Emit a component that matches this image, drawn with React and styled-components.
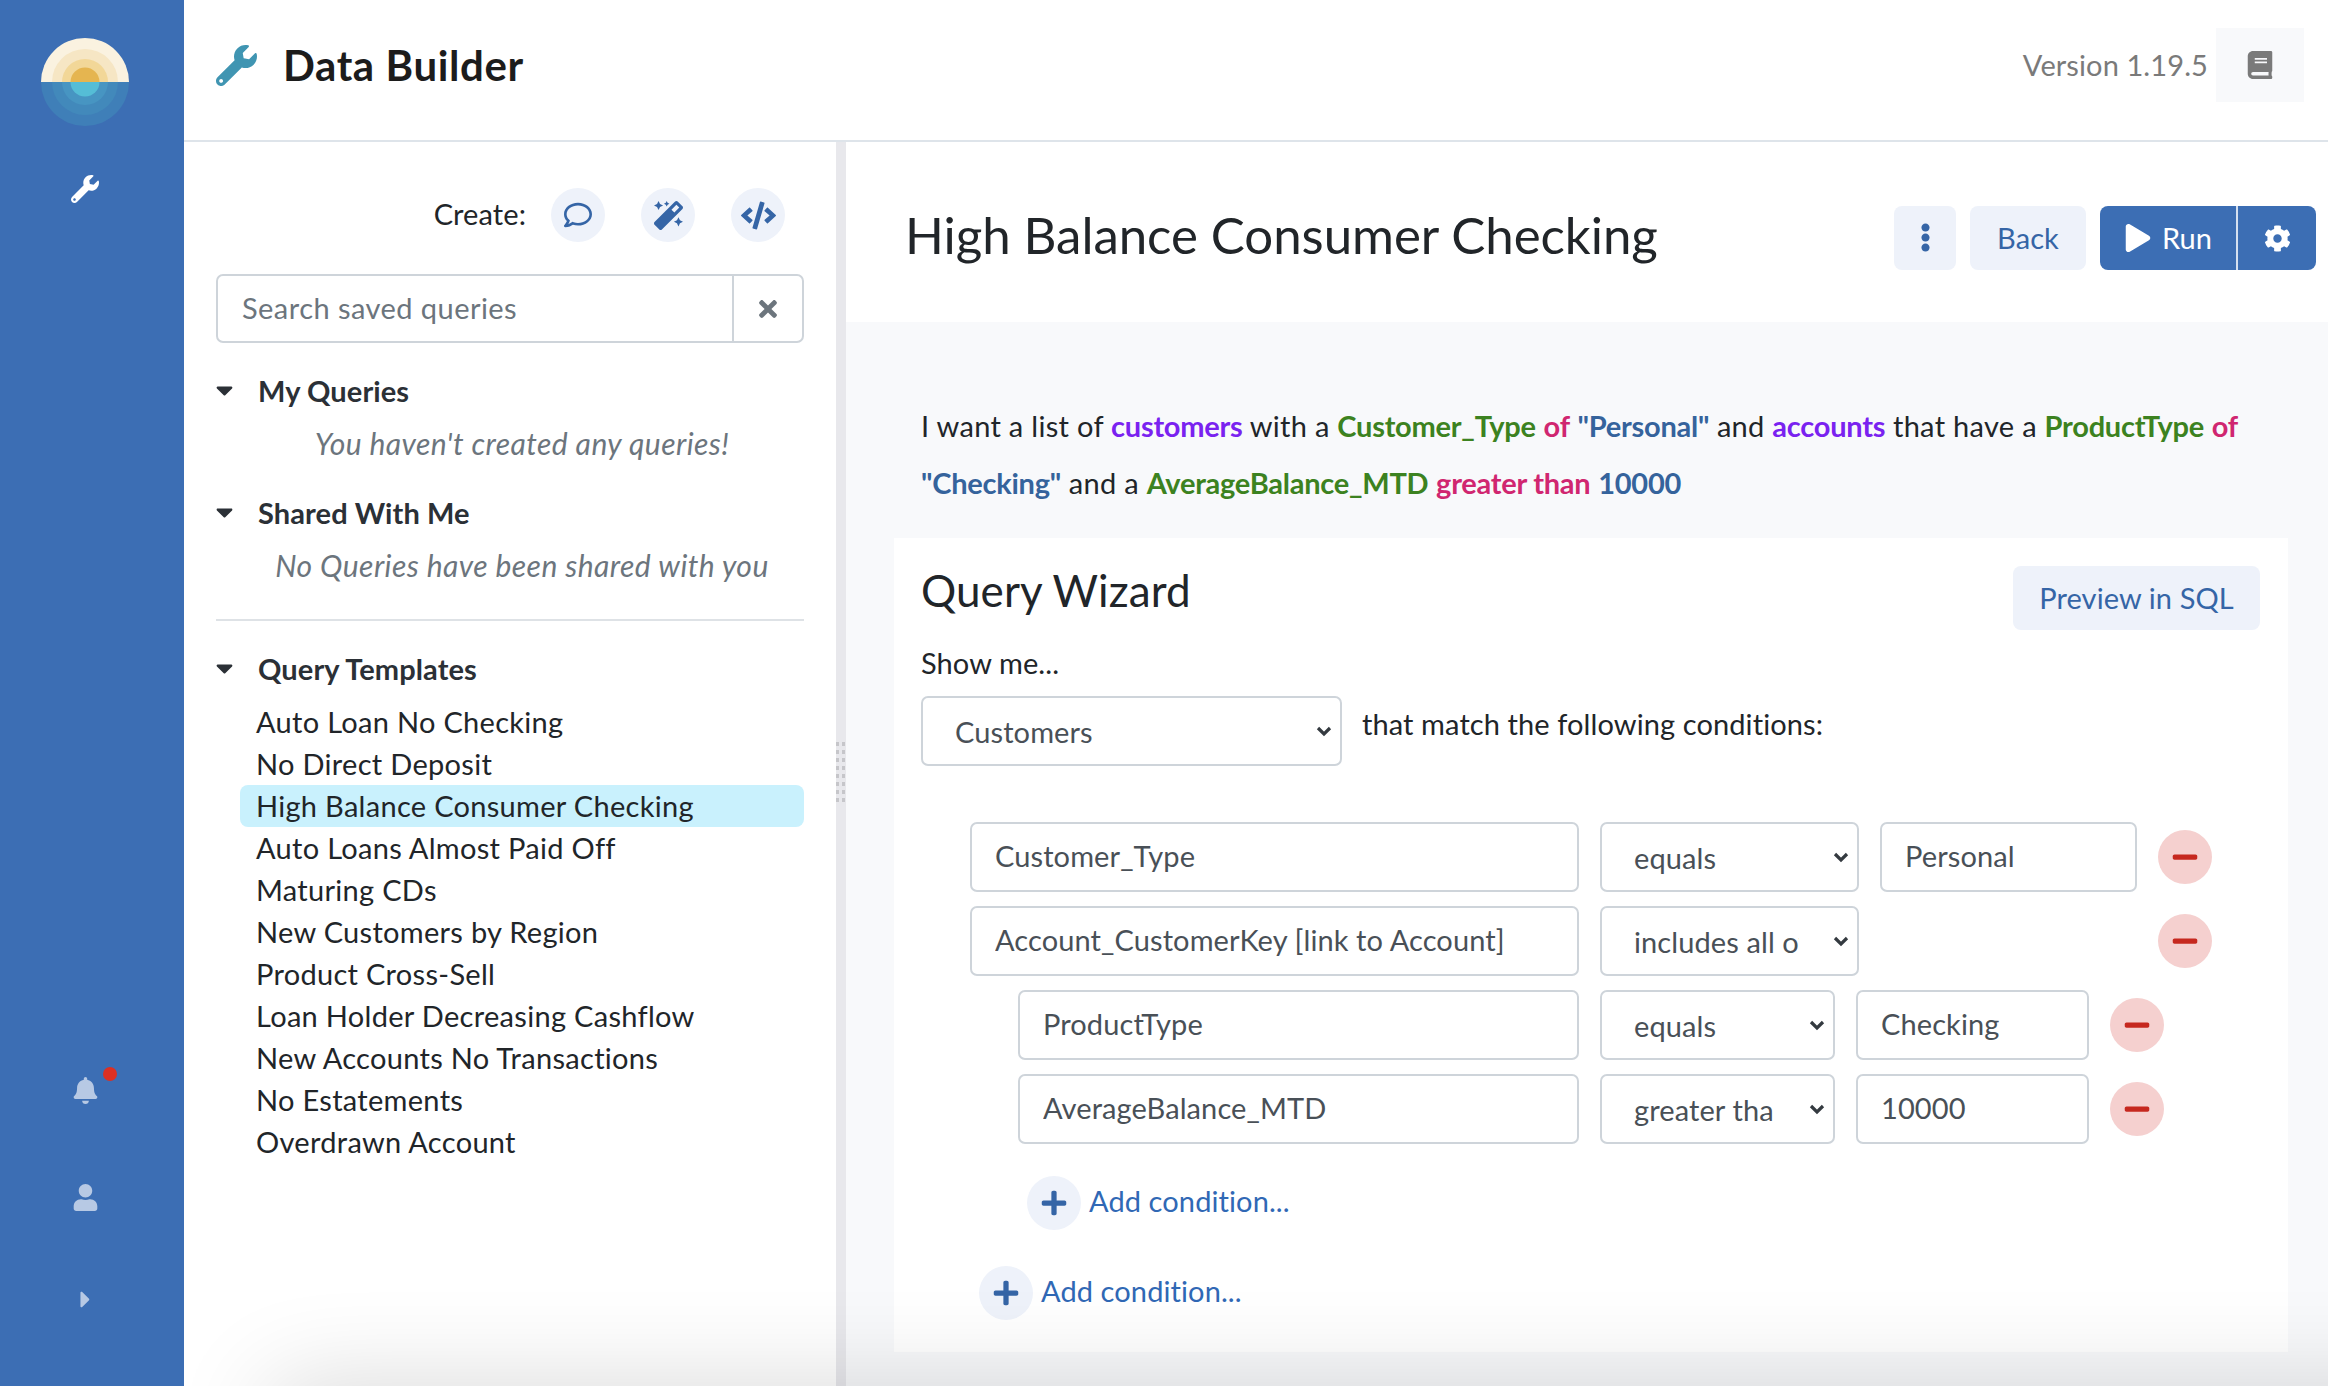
import React from "react";
import styled, { createGlobalStyle } from "styled-components";
import {
  FaWrench,
  FaBell,
  FaUser,
  FaCaretRight,
  FaCaretDown,
  FaBook,
  FaCog,
  FaPlay,
  FaPlus,
  FaMinus,
  FaTimes,
  FaEllipsisV,
  FaRegComment,
  FaCode,
  FaMagic,
} from "react-icons/fa";

const GlobalStyle = createGlobalStyle`
  html, body {
    margin: 0;
    padding: 0;
    height: 100%;
    overflow: hidden;
    background: #fff;
    font-family: "Lato", "Liberation Sans", sans-serif;
    font-size: 29px;
    letter-spacing: 0.1px;
    color: #212529;
  }
  * { box-sizing: border-box; }
`;

const templates = [
  "Auto Loan No Checking",
  "No Direct Deposit",
  "High Balance Consumer Checking",
  "Auto Loans Almost Paid Off",
  "Maturing CDs",
  "New Customers by Region",
  "Product Cross-Sell",
  "Loan Holder Decreasing Cashflow",
  "New Accounts No Transactions",
  "No Estatements",
  "Overdrawn Account",
];

const Logo = () => (
  <LogoSvg viewBox="0 0 88 88">
    <defs>
      <clipPath id="top">
        <rect x="0" y="0" width="88" height="44" />
      </clipPath>
      <clipPath id="bottom">
        <rect x="0" y="44" width="88" height="44" />
      </clipPath>
    </defs>
    <g clipPath="url(#top)">
      <circle cx="44" cy="44" r="44" fill="#faf2e0" />
      <circle cx="44" cy="44" r="33" fill="#f6e6c4" />
      <circle cx="44" cy="44" r="23" fill="#f2d798" />
      <circle cx="44" cy="44" r="14.5" fill="#e5b550" />
    </g>
    <g clipPath="url(#bottom)">
      <circle cx="44" cy="44" r="44" fill="#3f7fb8" />
      <circle cx="44" cy="44" r="33" fill="#4289bb" />
      <circle cx="44" cy="44" r="23" fill="#4795c2" />
      <circle cx="44" cy="44" r="14.5" fill="#55bdd6" />
    </g>
  </LogoSvg>
);

const Select = ({ value, width }) => (
  <SelectBox $width={width}>
    <NativeSelect value={value} onChange={() => {}}>
      <option>{value}</option>
    </NativeSelect>
    <Chevron viewBox="0 0 16 12">
      <polyline points="2,3 8,9 14,3" />
    </Chevron>
  </SelectBox>
);

const ConditionRow = ({ field, op, value, indent, wide }) => (
  <Row $indent={indent}>
    <FieldInput $indent={indent} value={field} readOnly />
    <Select value={op} width={wide ? 259 : 235} />
    {value !== undefined ? (
      <ValueInput $wide={wide} value={value} readOnly />
    ) : (
      <ValueGap $wide={wide} />
    )}
    <RemoveButton>
      <FaMinus />
    </RemoveButton>
  </Row>
);

const AddCondition = ({ indent }) => (
  <AddRow $indent={indent}>
    <AddButton>
      <FaPlus />
    </AddButton>
    <AddLabel>Add condition...</AddLabel>
  </AddRow>
);

export default function App() {
  return (
    <Page>
      <GlobalStyle />
      <Sidebar>
        <Logo />
        <SideWrench>
          <FaWrench />
        </SideWrench>
        <SideBottom>
          <SideIcon $after={80}>
            <FaBell />
            <RedDot />
          </SideIcon>
          <SideIcon $after={75}>
            <FaUser />
          </SideIcon>
          <SideIcon $after={0}>
            <FaCaretRight />
          </SideIcon>
        </SideBottom>
      </Sidebar>
      <Main>
        <TopBar>
          <AppWrench>
            <FaWrench />
          </AppWrench>
          <AppTitle>Data Builder</AppTitle>
          <Version>Version 1.19.5</Version>
          <BookButton>
            <FaBook />
          </BookButton>
        </TopBar>
        <Body>
          <LeftPanel>
            <CreateRow>
              <CreateLabel>Create:</CreateLabel>
              <RoundButton $size={28}>
                <FaRegComment />
              </RoundButton>
              <RoundButton $size={29}>
                <FaMagic />
              </RoundButton>
              <RoundButton $size={35}>
                <FaCode />
              </RoundButton>
            </CreateRow>
            <SearchBox>
              <SearchInput placeholder="Search saved queries" readOnly />
              <ClearButton>
                <FaTimes />
              </ClearButton>
            </SearchBox>
            <SectionHead $top={29}>
              <FaCaretDown />
              My Queries
            </SectionHead>
            <EmptyNote>You haven't created any queries!</EmptyNote>
            <SectionHead $top={33}>
              <FaCaretDown />
              Shared With Me
            </SectionHead>
            <EmptyNote>No Queries have been shared with you</EmptyNote>
            <Divider />
            <SectionHead $top={29}>
              <FaCaretDown />
              Query Templates
            </SectionHead>
            <TemplateList>
              {templates.map((t) => (
                <TemplateItem key={t} $active={t === "High Balance Consumer Checking"}>
                  {t}
                </TemplateItem>
              ))}
            </TemplateList>
          </LeftPanel>
          <Splitter>
            <Grip />
          </Splitter>
          <RightPanel>
            <QueryHeader>
              <QueryTitle>High Balance Consumer Checking</QueryTitle>
              <HeaderActions>
                <LightButton $w={62}>
                  <FaEllipsisV />
                </LightButton>
                <LightButton $w={116}>Back</LightButton>
                <RunGroup>
                  <RunButton>
                    <FaPlay />
                    Run
                  </RunButton>
                  <GearButton>
                    <FaCog />
                  </GearButton>
                </RunGroup>
              </HeaderActions>
            </QueryHeader>
            <Sentence>
              I want a list of <Entity>customers</Entity> with a <Field>Customer_Type</Field>{" "}
              <Op>of</Op> <Val>"Personal"</Val> and <Entity>accounts</Entity> that have a{" "}
              <Field>ProductType</Field> <Op>of</Op> <Val>"Checking"</Val> and a{" "}
              <Field>AverageBalance_MTD</Field> <Op>greater than</Op> <Val>10000</Val>
            </Sentence>
            <WizardCard>
              <WizardHead>
                <WizardTitle>Query Wizard</WizardTitle>
                <PreviewButton>Preview in SQL</PreviewButton>
              </WizardHead>
              <ShowMe>Show me...</ShowMe>
              <MatchRow>
                <Select value="Customers" width={421} />
                <MatchText>that match the following conditions:</MatchText>
              </MatchRow>
              <Conditions>
                <ConditionRow field="Customer_Type" op="equals" value="Personal" wide />
                <ConditionRow field="Account_CustomerKey [link to Account]" op="includes all of" wide />
                <ConditionRow field="ProductType" op="equals" value="Checking" indent />
                <ConditionRow field="AverageBalance_MTD" op="greater than" value="10000" indent />
                <AddCondition indent />
                <AddCondition />
              </Conditions>
            </WizardCard>
          </RightPanel>
        </Body>
      </Main>
      <BottomShade />
    </Page>
  );
}

const Page = styled.div`
  position: relative;
  display: flex;
  width: 2328px;
  height: 1386px;
  overflow: hidden;
`;

/* soft shadow rising from under the window's bottom edge */
const BottomShade = styled.div`
  position: absolute;
  left: 272px;
  right: -200px;
  top: 1386px;
  height: 100px;
  box-shadow: 0 0 100px rgba(0, 0, 0, 0.16);
  pointer-events: none;
`;

const Sidebar = styled.nav`
  width: 184px;
  flex-shrink: 0;
  background: #3c6eb4;
  display: flex;
  flex-direction: column;
  align-items: center;
  padding: 38px 14px 0 0;
`;

const LogoSvg = styled.svg`
  width: 88px;
  height: 88px;
  display: block;
`;

const SideWrench = styled.div`
  margin-top: 49px;
  color: #fff;
  font-size: 28px;
  line-height: 0;
`;

const SideBottom = styled.div`
  margin-top: auto;
  display: flex;
  flex-direction: column;
  align-items: center;
  padding-bottom: 73px;
`;

const SideIcon = styled.div`
  position: relative;
  color: #b7c9e4;
  font-size: 27px;
  line-height: 0;
  margin-bottom: ${(p) => p.$after}px;
`;

const RedDot = styled.span`
  position: absolute;
  top: -10px;
  right: -18px;
  width: 14px;
  height: 14px;
  border-radius: 50%;
  background: #dc3023;
`;

const Main = styled.div`
  flex: 1;
  min-width: 0;
  display: flex;
  flex-direction: column;
`;

const TopBar = styled.header`
  height: 142px;
  flex-shrink: 0;
  display: flex;
  align-items: center;
  padding: 0 24px 10px 32px;
  border-bottom: 2px solid #dee4ea;
`;

const AppWrench = styled.div`
  color: #4095b2;
  font-size: 41px;
  line-height: 0;
  margin-right: 26px;
`;

const AppTitle = styled.h1`
  margin: 0;
  font-size: 42px;
  font-weight: 700;
  color: #1c1c1c;
  letter-spacing: 0.6px;
`;

const Version = styled.span`
  margin-left: auto;
  margin-right: 8px;
  padding-bottom: 2px;
  color: #7a7a7a;
`;

const BookButton = styled.div`
  width: 88px;
  height: 74px;
  background: #f8f9fb;
  color: #7a7a7a;
  display: flex;
  align-items: center;
  justify-content: center;
  font-size: 28px;
`;

const Body = styled.div`
  flex: 1;
  min-height: 0;
  display: flex;
`;

const LeftPanel = styled.aside`
  width: 652px;
  flex-shrink: 0;
  padding: 46px 32px 0 32px;
`;

const CreateRow = styled.div`
  display: flex;
  align-items: center;
  justify-content: flex-end;
  gap: 36px;
  padding-right: 19px;
  height: 54px;
`;

const CreateLabel = styled.span`
  margin-right: -11px;
  padding-bottom: 4px;
`;

const RoundButton = styled.div`
  width: 54px;
  height: 54px;
  border-radius: 50%;
  background: #eef2fa;
  color: #3565a6;
  display: flex;
  align-items: center;
  justify-content: center;
  font-size: ${(p) => p.$size}px;
`;

const SearchBox = styled.div`
  display: flex;
  height: 69px;
  margin-top: 32px;
  border: 2px solid #ced4da;
  border-radius: 7px;
`;

const SearchInput = styled.input`
  flex: 1;
  min-width: 0;
  border: 0;
  outline: 0;
  background: none;
  padding: 0 24px 3px;
  font: inherit;
  letter-spacing: 0.45px;
  &::placeholder {
    color: #6c757d;
    opacity: 1;
  }
`;

const ClearButton = styled.div`
  width: 70px;
  border-left: 2px solid #ced4da;
  display: flex;
  align-items: center;
  justify-content: center;
  color: #6c757d;
  font-size: 26px;
`;

const SectionHead = styled.div`
  display: flex;
  align-items: center;
  height: 36px;
  margin-top: ${(p) => p.$top}px;
  font-weight: 700;
  color: #2b3036;

  svg {
    width: 17px;
    height: 28px;
    margin-right: 25px;
    color: #2b3036;
  }
`;

const EmptyNote = styled.div`
  margin-top: 17px;
  padding-left: 24px;
  height: 36px;
  line-height: 36px;
  text-align: center;
  font-size: 30px;
  letter-spacing: 0.45px;
  font-style: italic;
  color: #6c757d;
`;

const Divider = styled.hr`
  margin: 36px 0 0;
  border: 0;
  border-top: 2px solid #dee2e6;
`;

const TemplateList = styled.ul`
  list-style: none;
  margin: 15px 0 0;
  padding: 0 0 0 24px;
  letter-spacing: 0.3px;
`;

const TemplateItem = styled.li`
  height: 42px;
  line-height: 42px;
  padding-left: 16px;
  border-radius: 8px;
  background: ${(p) => (p.$active ? "#c9f1fd" : "transparent")};
`;

const Splitter = styled.div`
  width: 10px;
  flex-shrink: 0;
  background: #e8e8ec;
  display: flex;
  align-items: center;
  justify-content: center;
`;

const Grip = styled.div`
  width: 10px;
  height: 61px;
  margin-top: 16px;
  background-image: conic-gradient(#c6c6ca 25%, transparent 0);
  background-size: 6px 8px;
  background-position: -3px 0;
`;

const RightPanel = styled.main`
  flex: 1;
  min-width: 0;
  background: #f8f9fb;
  display: flex;
  flex-direction: column;
`;

const QueryHeader = styled.div`
  height: 180px;
  flex-shrink: 0;
  background: #fff;
  display: flex;
  align-items: flex-start;
  justify-content: space-between;
  padding: 63px 12px 0 59px;
`;

const QueryTitle = styled.h2`
  margin: 0;
  font-size: 51px;
  font-weight: 400;
  line-height: 60px;
  letter-spacing: -0.05px;
  color: #212529;
`;

const HeaderActions = styled.div`
  display: flex;
  gap: 14px;
  margin-top: 1px;
`;

const LightButton = styled.div`
  width: ${(p) => p.$w}px;
  height: 64px;
  padding-bottom: 2px;
  border-radius: 8px;
  background: #eef2fa;
  color: #3565a6;
  display: flex;
  align-items: center;
  justify-content: center;
`;

const RunGroup = styled.div`
  display: flex;
  height: 64px;
  border-radius: 8px;
  overflow: hidden;
  background: #3c6eb4;
  color: #fff;
`;

const RunButton = styled.div`
  width: 138px;
  padding-bottom: 2px;
  display: flex;
  align-items: center;
  justify-content: center;
  gap: 10px;
  border-right: 2px solid #d5e0f0;

  svg {
    font-size: 28px;
    margin-top: 2px;
  }
`;

const GearButton = styled.div`
  width: 78px;
  display: flex;
  align-items: center;
  justify-content: center;
  font-size: 27px;
`;

const Sentence = styled.p`
  margin: 0;
  padding: 75px 30px 0 75px;
  height: 216px;
  line-height: 57px;
  letter-spacing: 0.3px;
  flex-shrink: 0;
`;

const Entity = styled.strong`
  font-weight: 700;
  letter-spacing: -0.25px;
  color: #7a22f0;
`;

const Field = styled.strong`
  font-weight: 700;
  letter-spacing: -0.25px;
  color: #3c8220;
`;

const Op = styled.strong`
  font-weight: 700;
  letter-spacing: -0.25px;
  color: #d02670;
`;

const Val = styled.strong`
  font-weight: 700;
  letter-spacing: -0.25px;
  color: #35639c;
`;

const WizardCard = styled.section`
  margin: 0 40px 0 48px;
  height: 814px;
  flex-shrink: 0;
  background: #fff;
  padding: 28px 28px 0 27px;
`;

const WizardHead = styled.div`
  display: flex;
  justify-content: space-between;
  align-items: flex-start;
`;

const WizardTitle = styled.h3`
  margin: 0;
  font-size: 44px;
  line-height: 48px;
  font-weight: 400;
`;

const PreviewButton = styled.div`
  width: 247px;
  height: 64px;
  padding-bottom: 2px;
  border-radius: 8px;
  background: #eef2fa;
  color: #3565a6;
  display: flex;
  align-items: center;
  justify-content: center;
`;

const ShowMe = styled.div`
  margin-top: 15px;
  line-height: 36px;
`;

const MatchRow = styled.div`
  display: flex;
  align-items: flex-start;
  margin-top: 15px;
  gap: 20px;
`;

const SelectBox = styled.div`
  position: relative;
  flex-shrink: 0;
  width: ${(p) => p.$width}px;
  height: 70px;
`;

const NativeSelect = styled.select`
  appearance: none;
  width: 100%;
  height: 100%;
  border: 2px solid #ced4da;
  border-radius: 7px;
  background: #fff;
  font: inherit;
  letter-spacing: inherit;
  color: #495057;
  padding: 0 58px 0 32px;
`;

const Chevron = styled.svg`
  position: absolute;
  right: 10px;
  top: 29px;
  width: 16px;
  height: 12px;
  fill: none;
  stroke: #343a40;
  stroke-width: 3.2;
  pointer-events: none;
`;

const MatchText = styled.span`
  margin-top: 10px;
`;

const Conditions = styled.div`
  margin-top: 56px;
  padding-left: 50px;
`;

const Row = styled.div`
  display: flex;
  align-items: center;
  gap: 21px;
  margin-bottom: 14px;
  padding-left: ${(p) => (p.$indent ? 48 : 0)}px;
`;

const inputBase = `
  height: 70px;
  border: 2px solid #ced4da;
  border-radius: 7px;
  background: #fff;
  font: inherit;
  letter-spacing: inherit;
  color: #495057;
  padding: 0 23px 3px;
  outline: 0;
`;

const FieldInput = styled.input`
  ${inputBase}
  margin-left: -1px;
  width: ${(p) => (p.$indent ? 561 : 609)}px;
`;

const ValueInput = styled.input`
  ${inputBase}
  width: ${(p) => (p.$wide ? 257 : 233)}px;
`;

const ValueGap = styled.div`
  width: ${(p) => (p.$wide ? 257 : 233)}px;
`;

const RemoveButton = styled.div`
  width: 54px;
  height: 54px;
  border-radius: 50%;
  background: #f5d0cf;
  color: #c6281f;
  display: flex;
  align-items: center;
  justify-content: center;
  font-size: 28px;
`;

const AddRow = styled.div`
  display: flex;
  align-items: center;
  gap: 8px;
  height: 54px;
  margin-left: ${(p) => (p.$indent ? 56 : 8)}px;
  margin-top: ${(p) => (p.$indent ? 32 : 36)}px;
`;

const AddButton = styled.div`
  width: 54px;
  height: 54px;
  border-radius: 50%;
  background: #eef2fa;
  color: #3565a6;
  display: flex;
  align-items: center;
  justify-content: center;
  font-size: 28px;
`;

const AddLabel = styled.span`
  color: #3068b5;
  padding-bottom: 6px;
`;
